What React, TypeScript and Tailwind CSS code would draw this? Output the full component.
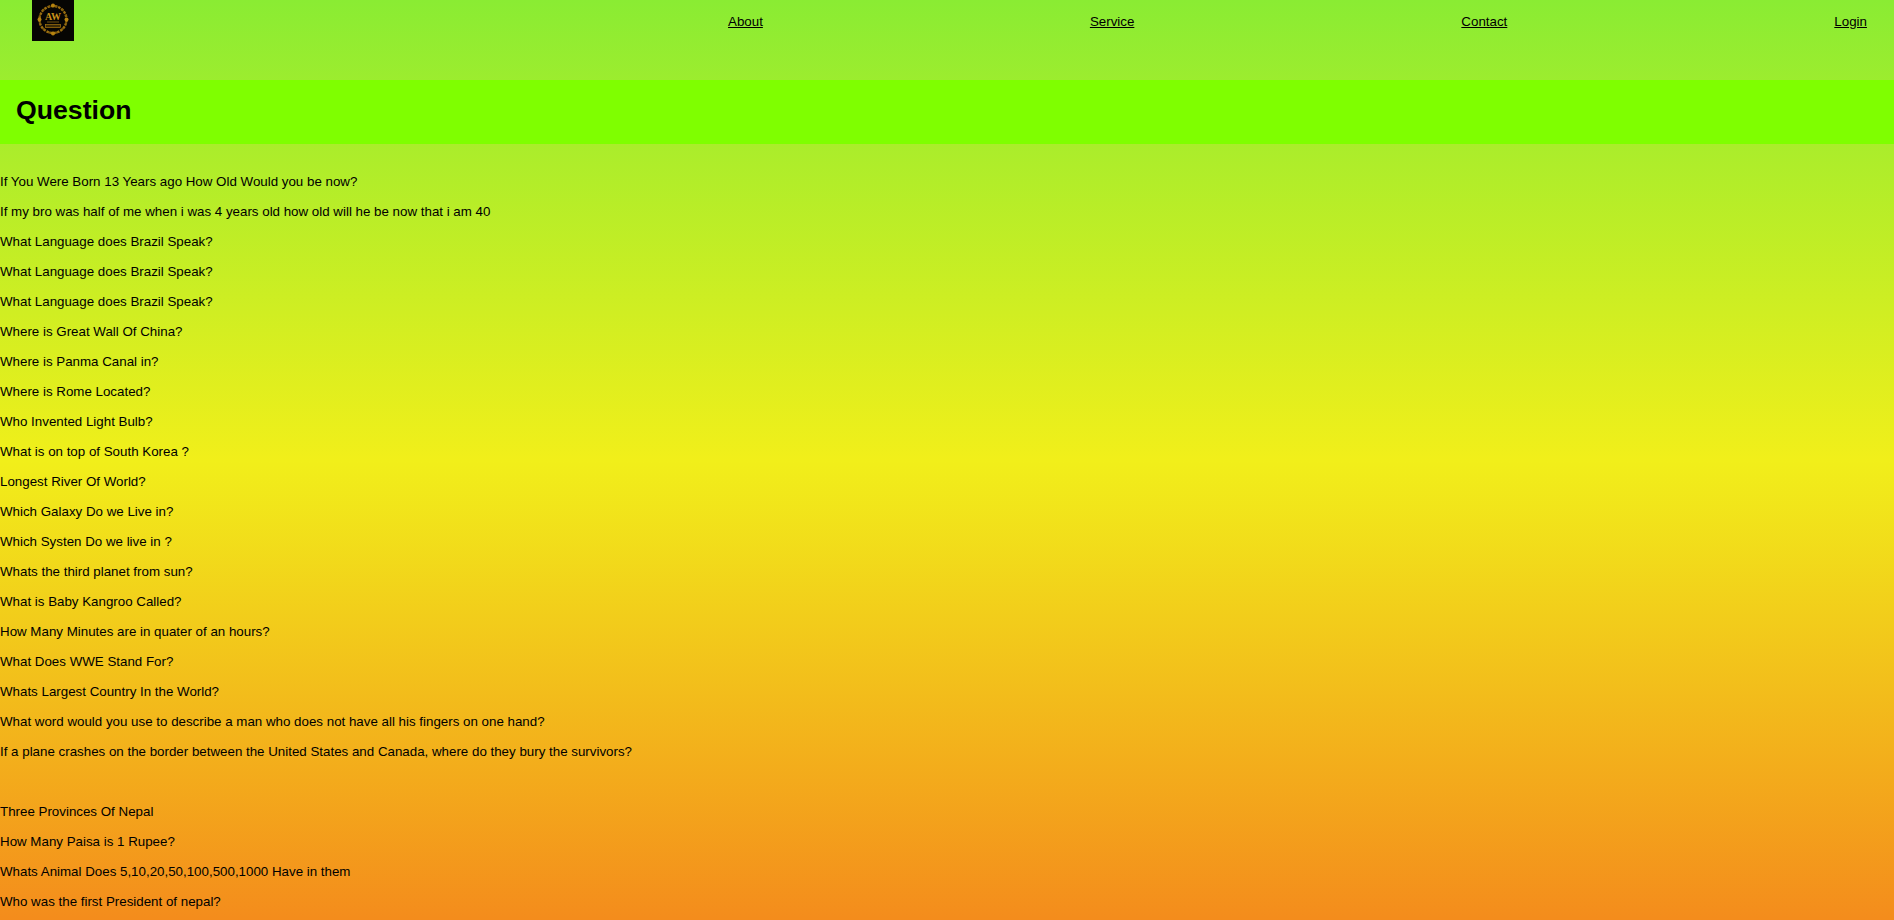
const questions = [
  "If You Were Born 13 Years ago How Old Would you be now?",
  "If my bro was half of me when i was 4 years old how old will he be now that i am 40",
  "What Language does Brazil Speak?",
  "What Language does Brazil Speak?",
  "What Language does Brazil Speak?",
  "Where is Great Wall Of China?",
  "Where is Panma Canal in?",
  "Where is Rome Located?",
  "Who Invented Light Bulb?",
  "What is on top of South Korea ?",
  "Longest River Of World?",
  "Which Galaxy Do we Live in?",
  "Which Systen Do we live in ?",
  "Whats the third planet from sun?",
  "What is Baby Kangroo Called?",
  "How Many Minutes are in quater of an hours?",
  "What Does WWE Stand For?",
  "Whats Largest Country In the World?",
  "What word would you use to describe a man who does not have all his fingers on one hand?",
  "If a plane crashes on the border between the United States and Canada, where do they bury the survivors?",
  "\u00a0",
  "Three Provinces Of Nepal",
  "How Many Paisa is 1 Rupee?",
  "Whats Animal Does 5,10,20,50,100,500,1000 Have in them",
  "Who was the first President of nepal?",
];

function Logo() {
  const dots = Array.from({ length: 12 }, (_, i) => (i * Math.PI) / 6 + Math.PI / 12);
  return (
    <div className="w-[42px] h-[41px] bg-[#060503] shrink-0">
      <svg viewBox="0 0 42 41" className="w-full h-full">
        <circle cx="21" cy="19.5" r="13.5" fill="none" stroke="#9a6e10" strokeWidth="2.4" strokeDasharray="2.6 1" />
        {dots.map((a) => (
          <circle key={a} cx={21 + 13.5 * Math.cos(a)} cy={19.5 + 13.5 * Math.sin(a)} r="1.1" fill="#7d5a0c" />
        ))}
        <circle cx="21" cy="5.5" r="2" fill="#b5820f" />
        <circle cx="21" cy="33.5" r="2" fill="#b5820f" />
        <circle cx="7.5" cy="19.5" r="2" fill="#b5820f" />
        <circle cx="34.5" cy="19.5" r="2" fill="#b5820f" />
        <text x="21" y="20" textAnchor="middle" fontFamily="Liberation Serif, serif" fontWeight="700" fontSize="10" fill="#c8921a">AW</text>
        <rect x="15" y="21.5" width="12" height="1" fill="#6f5210" />
        <rect x="13.5" y="24.5" width="15" height="3" fill="#3a2b08" stroke="#a8780f" strokeWidth="0.7" />
      </svg>
    </div>
  );
}

export default function App() {
  return (
    <div className="h-screen overflow-hidden bg-[linear-gradient(#8aec33,#f1ef1a_50%,#f48c1c)] text-black font-['Liberation_Sans',Arial,sans-serif] text-[13.33px]">
      <nav className="flex justify-between items-start h-20 pl-8 pr-[27px]">
        <Logo />
        <span />
        <a href="#" className="underline mt-[12px]">About</a>
        <a href="#" className="underline mt-[12px]">Service</a>
        <a href="#" className="underline mt-[12px]">Contact</a>
        <a href="#" className="underline mt-[12px]">Login</a>
      </nav>
      <div className="h-16 bg-[#7fff00] flex items-center pl-4">
        <h1 className="text-[26.67px] font-bold -mt-[4px]">Question</h1>
      </div>
      <div className="pt-[30px]">
        {questions.map((q, i) => (
          <p key={i} className="mb-[14px] leading-4">{q}</p>
        ))}
      </div>
    </div>
  );
}
